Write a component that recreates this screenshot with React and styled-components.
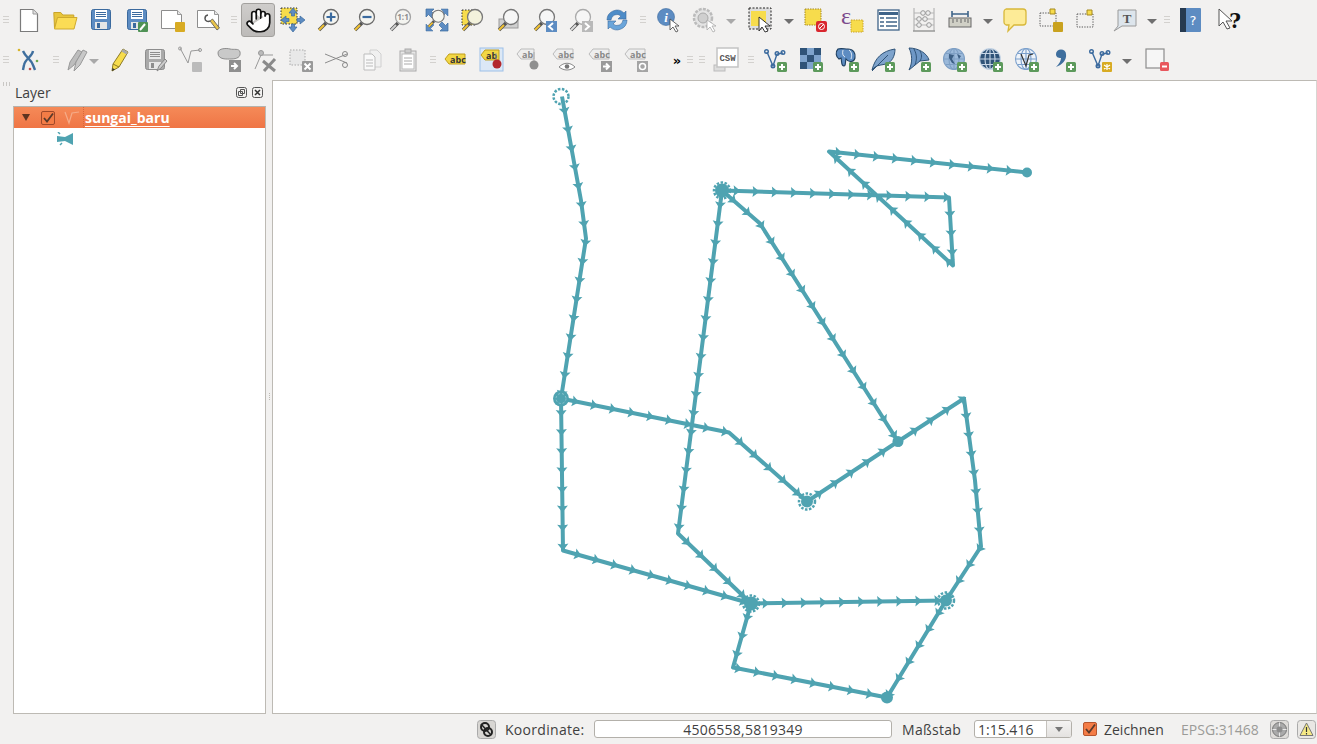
import React from "react";
import styled, { createGlobalStyle } from "styled-components";
import { Hand } from "lucide-react";

const Global = createGlobalStyle`
  html, body { margin: 0; padding: 0; background: #f2f1f0; overflow: hidden; }
  body { font-family: "Open Sans", "Noto Sans", sans-serif; color: #3c3c3c; }
`;

const Win = styled.div`
  width: 1317px;
  height: 744px;
  display: flex;
  flex-direction: column;
  background: #f2f1f0;
`;
const ToolRow = styled.div`
  height: 40px;
  display: flex;
  align-items: center;
  flex: none;
`;
const Tool = styled.div`
  flex: none;
  width: ${p => p.$w || 36}px;
  margin-left: ${p => p.$ml || 0}px;
  height: 34px;
  display: flex;
  align-items: center;
  justify-content: center;
  box-sizing: border-box;
  ${p => p.$on && `
    background: linear-gradient(#cfcdcb, #bdbbb9);
    border: 1px solid #a3a19e;
    border-radius: 3px;
  `}
  svg { display: block; overflow: visible; flex: none; }
`;
const Grip = styled.div`
  flex: none;
  width: ${p => p.$w}px;
  height: 9px;
  background: repeating-linear-gradient(#d3d1ce 0 1px, transparent 1px 3px) center / 6px 9px no-repeat;
`;
const Drop = styled.div`
  flex: none;
  width: ${p => p.$w}px;
  display: flex;
  justify-content: center;
  &::after {
    content: "";
    flex: none;
    border-left: 5px solid transparent;
    border-right: 5px solid transparent;
    border-top: 5px solid ${p => p.$light ? "#a9a9a9" : "#6f6f6f"};
    margin-top: 3px;
  }
`;
const More = styled.div`
  flex: none;
  width: 14px;
  margin-left: 16px;
  font: bold 13px "DejaVu Sans", sans-serif;
  color: #000;
  text-align: center;
`;
const Main = styled.div`
  flex: none;
  height: 634px;
  display: flex;
`;
const Panel = styled.div`
  flex: none;
  width: 266px;
  display: flex;
  flex-direction: column;
`;
const PanelHead = styled.div`
  height: 26px;
  display: flex;
  align-items: center;
  padding: 0 3px 2px 3px;
  box-sizing: border-box;
  font-size: 14px;
  color: #3f3f3f;
`;
const HeadGrip = styled.div`
  width: 8px;
  height: 4px;
  margin: -16px 4px 0 0;
  background: repeating-linear-gradient(90deg, #c9c7c4 0 1px, transparent 1px 3px);
`;
const HeadTitle = styled.span`
  flex: 1;
`;
const HeadBtn = styled.div`
  width: 11px;
  height: 11px;
  margin-left: 5px;
  svg { display: block; }
`;
const TreeBox = styled.div`
  flex: 1;
  margin-left: 13px;
  background: #fff;
  border: 1px solid #bdbab4;
  border-top-color: #b5b2ac;
`;
const Selected = styled.div`
  height: 21px;
  display: flex;
  align-items: center;
  background: linear-gradient(#f58a58, #ef7545);
  color: #fff;
  padding-left: 8px;
`;
const Expander = styled.div`
  width: 0;
  height: 0;
  border-left: 4px solid transparent;
  border-right: 4px solid transparent;
  border-top: 7px solid #5e3320;
  margin-right: 11px;
`;
const Check = styled.div`
  flex: none;
  width: 14px;
  height: 14px;
  box-sizing: border-box;
  border: 1px solid ${p => p.$dark ? "#a0492a" : "#b6562f"};
  border-radius: 2px;
  background: #f47c46;
  display: flex;
  align-items: center;
  justify-content: center;
  svg { display: block; }
`;
const LayerName = styled.span`
  margin-left: 2px;
  padding-left: 1px;
  font-size: 14px;
  font-weight: 700;
  text-decoration: underline;
  text-underline-offset: 3px;
  line-height: 21px;
  border-left: 1px dotted #d9663a;
`;
const Legend = styled.div`
  height: 21px;
  padding-left: 43px;
  display: flex;
  align-items: center;
  svg { display: block; }
`;
const Splitter = styled.div`
  flex: none;
  width: 6px;
  display: flex;
  align-items: center;
  justify-content: center;
  &::after {
    content: "";
    width: 1px;
    height: 8px;
    background: repeating-linear-gradient(#bdbab4 0 1px, transparent 1px 2px);
  }
`;
const MapBox = styled.div`
  flex: none;
  width: 1045px;
  box-sizing: border-box;
  background: #fff;
  border: 1px solid #bdbab4;
  border-right-color: #d8d6d2;
  svg { display: block; width: 100%; height: 100%; }
`;
const Status = styled.div`
  flex: 1;
  display: flex;
  align-items: center;
  justify-content: flex-end;
  font-size: 14px;
  color: #3f3f3f;
  padding-right: 1px;
`;
const StatusLabel = styled.span`
  flex: none;
  width: ${p => p.$w}px;
  letter-spacing: .3px;
  white-space: nowrap;
`;
const CoordInput = styled.div`
  width: 298px;
  height: 18px;
  box-sizing: border-box;
  margin: 0 10px 0 10px;
  background: #fff;
  border: 1px solid #b3b0aa;
  border-radius: 3px;
  text-align: center;
  font-size: 14px;
  letter-spacing: .25px;
  line-height: 17px;
`;
const ScaleCombo = styled.div`
  width: 98px;
  height: 18px;
  box-sizing: border-box;
  margin: 0 11px 0 8px;
  background: #fff;
  border: 1px solid #b3b0aa;
  border-radius: 3px;
  display: flex;
  font-size: 14px;
  line-height: 18px;
  overflow: hidden;
`;
const ScaleValue = styled.div`
  flex: 1;
  padding-left: 3px;
`;
const ScaleBtn = styled.div`
  width: 24px;
  background: linear-gradient(#f4f3f2, #e4e2e0);
  border-left: 1px solid #c5c2bd;
  display: flex;
  align-items: center;
  justify-content: center;
  &::after {
    content: "";
    border-left: 4px solid transparent;
    border-right: 4px solid transparent;
    border-top: 5px solid #777;
  }
`;
const RenderLabel = styled.span`
  flex: none;
  width: 60px;
  white-space: nowrap;
  margin: 0 17px 0 7px;
`;
const Epsg = styled.span`
  flex: none;
  width: 79px;
  color: #9b9b98;
  margin-right: 10px;
  white-space: nowrap;
`;
const StatusIcon = styled.div`
  flex: none;
  width: 19px;
  height: 19px;
  margin: ${p => p.$m || "0"};
  svg { display: block; }
`;

const BLUE = "#5d8cc2", DBLUE = "#3b6a9e", YEL = "#f7dc4c", TEAL = "#4fa3b1";

const S = ({ children }) => <svg width="24" height="24" viewBox="0 0 24 24">{children}</svg>;

const Plus = ({ x = 14, y = 14 }) => (
  <g>
    <rect x={x} y={y} width="10" height="10" rx="1.5" fill="#5d9a5c" />
    <path d={`M${x + 5} ${y + 2}v6M${x + 2} ${y + 5}h6`} stroke="#fff" strokeWidth="2" />
  </g>
);
const Star = ({ x = 14, y = 14, c = "#d8ab23" }) => (
  <g>
    <rect x={x} y={y} width="10" height="10" rx="1" fill={c} />
    <path d={`M${x + 5} ${y + 2}v6M${x + 2} ${y + 3}l6 4M${x + 8} ${y + 3}l-6 4`} stroke="#fff" strokeWidth="1.2" />
  </g>
);
const Lens = ({ c = "#8a8a8a", fill = "#f4f4f0", h = "#f1c232" }) => (
  <g>
    <path d="M2 22l7-7" stroke="#555" strokeWidth="3.4" />
    <path d="M2 22l5-5" stroke={h} strokeWidth="2" />
    <circle cx="14" cy="9" r="7.5" fill={fill} stroke={c} strokeWidth="1.3" />
  </g>
);
const Disk = ({ c = BLUE, d = DBLUE, l = "#fff" }) => (
  <g>
    <rect x="2.5" y="1.5" width="19" height="20" rx="2" fill={c} stroke={d} />
    <rect x="6" y="2" width="12" height="9" fill={l} />
    <path d="M7 4.5h10M7 6.5h10M7 8.5h10" stroke={d} />
    <rect x="6" y="14" width="12" height="7" fill="#e6e6e6" />
    <rect x="8" y="15" width="3" height="5" fill={d} />
  </g>
);
const VLine = ({ c = DBLUE }) => (
  <g fill="none" stroke={c} strokeWidth="1.4">
    <path d="M4 4l6 14 4-12 6-1" />
    <circle cx="3.5" cy="3.5" r="1.8" /><circle cx="10" cy="18" r="1.8" />
    <circle cx="14" cy="5.5" r="1.8" /><circle cx="20" cy="4.5" r="1.8" />
  </g>
);
const Tag = ({ fill = "#f2d744", stroke = "#c09e1c", text = "abc", c = "#333", x = 1, y = 2, w = 20 }) => (
  <g>
    <path d={`M${x} ${y + 5}l4-5h${w - 4}v10h-${w - 4}z`} fill={fill} stroke={stroke} />
    <text x={x + 5} y={y + 8.5} fontSize="9" fontWeight="700" fontFamily="Open Sans, sans-serif" fill={c}>{text}</text>
  </g>
);
const Globe = ({ fill, line }) => (
  <g fill="none" stroke={line} strokeWidth="1.1">
    <circle cx="11" cy="11" r="10.5" fill={fill} />
    <ellipse cx="11" cy="11" rx="5" ry="10.5" />
    <path d="M1 11h20M3 5.5h16M3 16.5h16M11 .5v21" />
  </g>
);
const checker = [0, 1, 2].flatMap(r => [0, 1, 2].map(c => ({ r, c })));

const icons = {
  newDoc: <S><path d="M3.5 1.5H16L20.5 6V23.5H3.5Z" fill="#fff" stroke="#7b7b7b" strokeWidth="1.2" /><path d="M16 1.5V6H20.5" fill="#e2e2e2" stroke="#9a9a9a" /></S>,
  open: <S><path d="M1.5 20L.8 4.5h7l2 2.5h11v2.5H5z" fill="#e8c63c" stroke="#c9a42a" /><path d="M1.5 21 4.5 9.5H24L21 21Z" fill="#fbdc55" stroke="#cfaa2e" /></S>,
  save: <S><Disk /></S>,
  saveAs: <S><Disk /><rect x="13" y="14" width="10" height="10" rx="1" fill="#4f9255" /><path d="M15 22l5-6" stroke="#fff" strokeWidth="2" /></S>,
  newPrint: <S><path d="M.5 2.500h16l4 4v14H.5z" fill="#fff" stroke="#8d8d8d" /><path d="M16.500 2.500v4h4" fill="#e6e6e6" stroke="#999" /><Star x="14" y="14" /></S>,
  composer: <S><path d="M.5 2.500h17l4 4v13H.5z" fill="#fff" stroke="#8d8d8d" /><path d="M17.500 2.500v4h4" fill="#e6e6e6" stroke="#999" /><path d="M11 7a3.500 3.500 0 0 0-3 3.500c0 2.500 3 3.500 5 2.500" fill="none" stroke="#555" strokeWidth="1.500" /><path d="M13 13l7 9 2.500-2-7-9z" fill="#e9c44a" stroke="#555" strokeWidth=".8" /></S>,
  panMap: <S><rect x="0" y="0" width="16" height="16" fill={YEL} stroke="#333" strokeDasharray="1.5 1.5" /><path d="M12 0l4 5h-2.5v3h-3v-3H8zM12 24l-4-5h2.5v-3h3v3H16zM0 12l5-4v2.5h3v3H5V16zM24 12l-5-4v2.5h-3v3h3V16z" fill={BLUE} stroke={DBLUE} strokeWidth=".7" /></S>,
  zoomIn: <S><Lens c="#6b6b6b" /><path d="M9.5 9h9M14 4.5v9" stroke={DBLUE} strokeWidth="2.2" /></S>,
  zoomOut: <S><Lens c="#6b6b6b" /><path d="M9.5 9h9" stroke={DBLUE} strokeWidth="2.2" /></S>,
  zoom11: <S><Lens c="#a3a3a3" h="#cfcfcf" /><text x="14" y="12" textAnchor="middle" fontSize="8" fontWeight="700" fontFamily="Open Sans, sans-serif" fill="#8d8d8d">1:1</text></S>,
  zoomFull: <S><path d="M1 1h8L6.500 3.500 10 7l-3 3-3.500-3.500L1 9zM23 1v0M23 23h-8l2.500-2.500L14 17l3-3 3.500 3.500L23 15z" fill={BLUE} stroke={DBLUE} strokeWidth=".7" /><path d="M16 1h7v7l-2.500-2.500L17 9l-2-2 3.500-3.500zM8 23H1v-7l2.500 2.500L7 15l2 2-3.500 3.500z" fill={BLUE} stroke={DBLUE} strokeWidth=".5" /><g transform="translate(2 1) scale(.8)"><Lens c="#777" fill="#f6f6f0" /></g></S>,
  zoomSel: <S><rect x="1" y="2" width="14" height="15" fill={YEL} stroke="#333" strokeDasharray="1.5 1.5" /><Lens c="#777" fill="#f3f2dc" /></S>,
  zoomLayer: <S><rect x="2" y="11" width="19" height="9" fill="#cfcfcf" stroke="#9a9a9a" /><Lens c="#777" fill="#f6f6f6" /></S>,
  zoomLast: <S><Lens c="#777" fill="#f6f6f6" /><rect x="13" y="13" width="11" height="11" fill={BLUE} /><path d="M20 15l-4 3.5 4 3.5" fill="none" stroke="#fff" strokeWidth="2" /></S>,
  zoomNext: <S><Lens c="#aaa" h="#ddd" fill="#f6f6f6" /><rect x="13" y="13" width="11" height="11" fill="#b9b9b9" /><path d="M16 15l4 3.5-4 3.5" fill="none" stroke="#fff" strokeWidth="2" /></S>,
  refresh: <S><path d="M2 12a10 10 0 0 1 17-7l2-2v8h-8l3-3a6 6 0 0 0-10 4z" fill="#4d8cc8" stroke={DBLUE} strokeWidth=".6" /><path d="M22 12a10 10 0 0 1-17 7l-2 2v-8h8l-3 3a6 6 0 0 0 10-4z" fill="#6aa5da" stroke={DBLUE} strokeWidth=".6" /></S>,
  identify: <S><circle cx="9" cy="9" r="8.5" fill={BLUE} stroke={DBLUE} strokeWidth=".6" /><text x="9" y="14" textAnchor="middle" fontSize="13" fontWeight="700" fontStyle="italic" fontFamily="Liberation Serif, serif" fill="#fff">i</text><path d="M13 11v11l3-3 3 5 2-1-3-5h4z" fill="#fff" stroke="#444" strokeWidth=".8" /></S>,
  action: <S><circle cx="10" cy="10" r="9" fill="#e4e4e4" stroke="#bbb" strokeWidth="2.5" strokeDasharray="3 1.2" /><circle cx="10" cy="10" r="5" fill="#cfcfcf" stroke="#aaa" /><path d="M14 12v10l3-3 3 5 2-1-3-5h4z" fill="#fff" stroke="#aaa" strokeWidth=".8" /></S>,
  select: <S><rect x="0" y="0" width="22" height="21" fill="#ddd" stroke="#222" strokeDasharray="2 1.5" /><rect x="2" y="3" width="15" height="15" fill={YEL} /><path d="M10 9v14l3-4 3 5 3-1-3-5h5z" fill="#fff" stroke="#222" strokeWidth=".9" /></S>,
  deselect: <S><rect x="1" y="1" width="16" height="16" fill={YEL} stroke="#a68a1e" strokeDasharray="1.5 1" /><rect x="12" y="13" width="11" height="11" rx="2" fill="#d9262e" /><circle cx="17.5" cy="18.5" r="3" fill="none" stroke="#fff" /><path d="M15 21l5-5" stroke="#fff" /></S>,
  expr: <S><rect x="11" y="12" width="12" height="12" fill={YEL} stroke="#c9a42a" strokeDasharray="1.5 1" /><text x="6" y="16" textAnchor="middle" fontSize="24" fontFamily="Liberation Serif, serif" fill="#7c4a8c">ε</text></S>,
  table: <S><rect x="2" y="2" width="21" height="20" fill="#fff" stroke="#3f6489" strokeWidth="1.3" /><path d="M3 5.5h19" stroke="#3f6489" strokeWidth="3" /><path d="M4 10h4M4 14h4M4 18h4M10 10h11M10 14h11M10 18h11" stroke="#3f6489" strokeWidth="1.5" /></S>,
  stats: <S><path d="M2 0v23M22 0v23" stroke="#aaa" /><path d="M1 23h22" stroke="#999" strokeWidth="1.500" /><path d="M2 5h20M2 11h20M2 17h20" stroke="#b5b5b5" /><circle cx="11" cy="5" r="2.300" fill="#eee" stroke="#999" /><circle cx="16" cy="5" r="2.300" fill="#eee" stroke="#999" /><circle cx="7" cy="11" r="2.300" fill="#eee" stroke="#999" /><circle cx="13" cy="11" r="2.300" fill="#eee" stroke="#999" /><circle cx="7" cy="17" r="2.300" fill="#eee" stroke="#999" /><circle cx="17" cy="17" r="2.300" fill="#eee" stroke="#999" /></S>,
  measure: <S><path d="M4 3v6M20 3v6M4 6h16" stroke="#3f6489" strokeWidth="1.6" /><rect x="1" y="10" width="22" height="9" fill="#d0d0c6" stroke="#666" /><path d="M5 11v4M9 11v3M13 11v4M17 11v3M20 11v4" stroke="#666" /></S>,
  tip: <S><path d="M3 1h17a3 3 0 0 1 3 3v10a3 3 0 0 1-3 3H11l-6 6 1-6H3a3 3 0 0 1-2-3V4a3 3 0 0 1 2-3z" fill="#fdeb97" stroke="#d8b83a" strokeWidth="1.3" /></S>,
  annotNew: <S><rect x="1" y="5" width="16" height="13" fill="none" stroke="#555" strokeDasharray="1.3 1.3" /><path d="M11 1h5v5h-5z" fill={YEL} stroke="#a68a1e" /><Star x="14" y="14" c="#c9a21f" /></S>,
  annot: <S><rect x="2" y="6" width="16" height="13" fill="none" stroke="#555" strokeDasharray="1.3 1.3" /><path d="M12 2h5v5h-5z" fill={YEL} stroke="#a68a1e" /></S>,
  textAnn: <S><path d="M5 2h18v16H9l-8 5 4-5z" fill="#dde5ec" stroke="#9a9a9a" /><text x="14" y="15" textAnchor="middle" fontSize="13" fontWeight="700" fontFamily="Liberation Serif, serif" fill="#555">T</text></S>,
  help: <S><rect x="1" y="0" width="20" height="24" rx="1" fill={BLUE} /><rect x="0" y="0" width="6" height="24" fill="#263a50" /><text x="13" y="17" textAnchor="middle" fontSize="13" fontFamily="DejaVu Sans, sans-serif" fill="#fff">?</text></S>,
  whatsThis: <S><path d="M1 1v17l4-4 4 7 3-1-4-7h6z" fill="#fff" stroke="#555" /><text x="17" y="20" textAnchor="middle" fontSize="20" fontWeight="700" fontFamily="DejaVu Serif, serif" fill="#111">?</text></S>,

  digit: <S><path d="M6 3c3 7 8 8 10 14l2 5M16 3c-1 6-8 8-9 14l-1 5" fill="none" stroke="#3f6f9e" strokeWidth="2.4" /><circle cx="2" cy="2" r="1.3" fill="#d7b52a" /><circle cx="20" cy="13" r="1.3" fill="#6ba84f" /><circle cx="13" cy="21" r="1.3" fill="#c0504d" /></S>,
  pencils: <S><path d="M2 22l2-8 8-12 4 2-8 13z" fill="#bdbdbd" stroke="#999" /><path d="M8 23l2-9 7-12 4 2-7 13z" fill="#c8c8c8" stroke="#999" /></S>,
  pencil: <S><path d="M5 23l1-7L16 1l5 3-9 15z" fill={YEL} stroke="#8c7a25" /><path d="M6 16l6 3" stroke="#8c7a25" /><path d="M16 1l5 3-1.500 2.500-5-3z" fill="#aaa" /><path d="M5 23l.5-3 2.500 1.500z" fill="#333" /></S>,
  saveEd: <S><Disk c="#a9a9a9" d="#8d8d8d" l="#e9e9e9" /><path d="M14 23l2-5 6-7 2 2-6 7z" fill="#ccc" stroke="#888" /></S>,
  addFeat: <S><g transform="translate(-1 -1)"><path d="M2 1l8 15 3-12 9-1" fill="none" stroke="#999" /><circle cx="2" cy="1.500" r="1.500" fill="none" stroke="#999" /><circle cx="22" cy="3" r="1.500" fill="none" stroke="#999" /></g><Star x="13" y="14" c="#bbb" /></S>,
  addRing: <S><path d="M1 5c0-5 9-5 12-4 4 1 9-1 10 3 1 5-3 7-9 7-4 0-13 1-13-6z" fill="#c9c9c9" stroke="#8e8e8e" /><rect x="12" y="12" width="12" height="12" fill="#8f8f8f" /><path d="M14 18h5M17 15l3 3-3 3" fill="none" stroke="#fff" strokeWidth="2" /></S>,
  nodeTool: <S><path d="M2 21l6-14h12" fill="none" stroke="#999" /><circle cx="8" cy="5" r="2.500" fill="#bbb" stroke="#999" /><path d="M10 13l12 10M22 11l-11 12" stroke="#8a8a8a" strokeWidth="3" /></S>,
  delete: <S><rect x="1" y="2" width="15" height="15" fill="#e8e8e8" stroke="#aaa" strokeDasharray="1.500 1.500" /><rect x="13" y="13" width="11" height="11" rx="1" fill="#999" /><path d="M15.500 15.500l6 6M21.500 15.500l-6 6" stroke="#fff" strokeWidth="2" /></S>,
  cut: <S><path d="M0 7l22 9M0 16 22 7" stroke="#8c8c8c" strokeWidth="1" transform="translate(0 -1)" /><circle cx="20" cy="6" r="2.500" fill="none" stroke="#888" /><circle cx="20" cy="17" r="2.500" fill="none" stroke="#888" /></S>,
  copy: <S><path d="M9 2h7l4 4v13H9z" fill="#f0f0f0" stroke="#d0d0d0" /><path d="M3 6h8l3 3v13H3z" fill="#f9f9f9" stroke="#bdbdbd" /><path d="M5 12h7M5 15h7M5 18h7" stroke="#bbb" /></S>,
  paste: <S><rect x="3" y="3" width="16" height="20" fill="#e7e7e7" stroke="#aaa" /><rect x="5" y="6" width="12" height="15" fill="#fff" stroke="#bbb" /><rect x="8" y="1" width="6" height="4" fill="#ccc" stroke="#aaa" /><path d="M7 10h8M7 13h8M7 16h8" stroke="#aaa" /></S>,
  lab1: <S><Tag x={1} y={6} /></S>,
  lab2: <S><rect x="0" y="0" width="23" height="23" fill="#dce8f6" stroke="#9cc0e8" /><Tag x={1} y={2} w={18} text="ab" /><path d="M16 5v8" stroke="#999" /><circle cx="17" cy="16" r="4.500" fill="#b3282d" /></S>,
  lab3: <S><Tag fill="#eee" stroke="#bbb" c="#888" text="ab" w={17} y={1} /><path d="M18 4v9" stroke="#aaa" /><circle cx="18" cy="17" r="4.500" fill="#8f8f8f" /></S>,
  lab4: <S><Tag fill="#eee" stroke="#bbb" c="#888" y={1} /><path d="M7 19c5-5 11-5 16 0-5 4-11 4-16 0z" fill="#fff" stroke="#888" /><circle cx="15" cy="18.500" r="2.300" fill="#777" /></S>,
  lab5: <S><Tag fill="#eee" stroke="#bbb" c="#888" y={1} /><rect x="13" y="13" width="11" height="11" fill="#9a9a9a" /><path d="M15 18.500h5M18 15.500l3 3-3 3" fill="none" stroke="#fff" strokeWidth="2" /></S>,
  lab6: <S><Tag fill="#eee" stroke="#bbb" c="#888" y={1} /><rect x="13" y="13" width="11" height="11" fill="#a4a4a4" /><circle cx="18.500" cy="18.500" r="3" fill="none" stroke="#fff" strokeWidth="1.500" /></S>,
  csw: <S><rect x="0" y="17" width="11" height="6" fill="#ddd" stroke="#bbb" /><rect x="3" y="0" width="21" height="19" fill="#fff" stroke="#c3c3c3" strokeWidth="1.500" /><text x="13.500" y="13" textAnchor="middle" fontSize="9" fontWeight="700" fontFamily="Liberation Mono, monospace" fill="#555">CSW</text></S>,
  addV: <S><VLine /><Plus /></S>,
  addRaster: <S>{checker.map(({ r, c }) => <rect key={`${r}${c}`} x={1 + c * 7} y={r * 7} width="7" height="7" fill={(r + c) % 2 ? "#7ea3cc" : "#2f5378"} />)}<Plus /></S>,
  addPg: <S><path d="M3 1c-3 3-2 8 1 10l2-1c1 4 0 8 3 8 2 0 1-4 2-7 3 4 8 3 9-1 1-5-2-9-7-9-4 0-7-1-10 0z" fill="#5d8cc2" stroke="#1f3f5f" strokeWidth="1.100" /><path d="M8 2c-1 4 0 6 2 7M14 2c3 2 3 6 2 9" fill="none" stroke="#fff" strokeWidth=".8" /><Plus /></S>,
  addFeather: <S><path d="M1 22C4 10 11 3 24 1c0 7-3 13-9 15-4 1-8 1-11 3z" fill="#7ea3cc" stroke="#2f5378" /><path d="M1 23 17 7" stroke="#2f5378" /><Plus /></S>,
  addWing: <S><path d="M2 0c9 0 18 5 20 12l-9 1-11 9c4-8 3-16 0-22z" fill="#6f98c6" stroke="#2f5378" /><path d="M7 1c3 6 3 10 1 16M13 3c2 3 2 7 0 10" stroke="#2f5378" fill="none" /><Plus /></S>,
  addWms: <S><Globe fill="#9bb9da" line="#7e9fc4" /><path d="M6 6l5 1-2 4 3 5-3-1-3-5zM14 6l4 2-2 3z" fill="#3c5f85" /><Plus /></S>,
  addWcs: <S><Globe fill="#2f5378" line="#c7d6e6" /><Plus /></S>,
  addWfs: <S><Globe fill="#eef3f9" line="#7ba0cc" /><path d="M6 6l5 12 3-11 4-1" fill="none" stroke="#333" strokeWidth="1.200" /><Plus /></S>,
  addDelim: <S><path d="M4 6a5 4.500 0 0 1 10 0c1 6-4 11-10 13 3-3 5-6 5-9-3 0-5-1-5-4z" fill="#3f6f9e" /><Plus x={14} y={14} /></S>,
  newV: <S><VLine /><Star /></S>,
  remove: <S><rect x="1" y="1" width="18" height="19" fill="#f6f6f6" stroke="#8d8d8d" strokeWidth="1.200" /><rect x="15" y="14" width="9" height="9" rx="1.500" fill="#e8575d" /><path d="M17 18.500h5" stroke="#fff" strokeWidth="2" /></S>,
};

const row1 = [
  ["g", 11], ["newDoc"], ["open"], ["save"], ["saveAs"], ["newPrint"], ["composer"], ["g", 14],
  ["pan"], ["panMap"], ["zoomIn"], ["zoomOut"], ["zoom11"], ["zoomFull"], ["zoomSel"], ["zoomLayer"], ["zoomLast"], ["zoomNext"], ["refresh"],
  ["g", 16], ["identify"], ["action"], ["d", 16, true], ["select", 36, 4], ["d", 19], ["deselect"], ["expr"], ["table"], ["stats"], ["measure"], ["d", 19],
  ["tip"], ["annotNew"], ["annot"], ["textAnn", 36, 2], ["d", 17], ["g", 14], ["help"], ["whatsThis", 36, 2],
];
const row2 = [
  ["g", 11], ["digit"], ["g", 17], ["pencils", 28], ["d", 4, true], ["pencil", 36, 5], ["saveEd"], ["addFeat"], ["addRing", 36, 2], ["nodeTool"], ["delete"], ["cut"], ["copy"], ["paste"],
  ["g", 11], ["lab1"], ["lab2"], ["lab3"], ["lab4"], ["lab5"], ["lab6"], ["more"], ["g", 12], ["g", 12], ["csw"], ["g", 13],
  ["addV"], ["addRaster"], ["addPg"], ["addFeather"], ["addWing"], ["addWms"], ["addWcs"], ["addWfs"], ["addDelim", 36, 1], ["newV"], ["d", 18], ["remove", 36, 3],
];

function renderTool([k, w, extra], i) {
  if (k === "g") return <Grip key={i} $w={w} />;
  if (k === "d") return <Drop key={i} $w={w} $light={extra} />;
  if (k === "more") return <More key={i}>»</More>;
  if (k === "pan") return <Tool key={i} $w={34} $on><Hand size={27} fill="#fff" color="#111" strokeWidth={1.5} /></Tool>;
  return <Tool key={i} $w={w} $ml={extra}>{icons[k]}</Tool>;
}

// river network in page coordinates
const lines = [
  [[562, 96], [581, 200], [586, 238], [561, 398]],
  [[561, 398], [563, 550], [751, 603]],
  [[561, 398], [729, 432], [807, 501]],
  [[807, 501], [898, 441], [964, 398], [975, 480], [981, 546], [946, 600], [887, 697]],
  [[722, 190], [760, 223], [898, 441]],
  [[722, 190], [949, 197], [953, 265], [829, 151], [1027, 172]],
  [[722, 190], [678, 533], [751, 603]],
  [[751, 603], [946, 600]],
  [[751, 603], [733, 667], [887, 697]],
];

function arrowsAlong(pts) {
  const out = [];
  let next = 15;
  let walked = 0;
  for (let i = 0; i < pts.length - 1; i++) {
    const [x1, y1] = pts[i];
    const [x2, y2] = pts[i + 1];
    const len = Math.hypot(x2 - x1, y2 - y1);
    while (next < walked + len) {
      const t = (next - walked) / len;
      out.push({
        x: x1 + (x2 - x1) * t,
        y: y1 + (y2 - y1) * t,
        a: (Math.atan2(y2 - y1, x2 - x1) * 180) / Math.PI,
      });
      next += 19.1;
    }
    walked += len;
  }
  return out;
}

const solid = [[1027, 172, 5], [898, 441, 5.5], [887, 697, 6], [722, 190, 7], [561, 398, 8], [807, 501, 6], [751, 603, 7], [946, 600, 6]];
const rings = [[561, 96, 7.5], [807, 501, 8], [751, 603, 8], [946, 600, 8], [722, 190, 8]];

function RiverMap() {
  return (
    <svg viewBox="273 80.5 1043 632">
      {lines.map((l, i) => (
        <g key={i}>
          <polyline points={l.map(p => p.join(",")).join(" ")} fill="none" stroke={TEAL} strokeWidth="4" strokeLinejoin="round" />
          {arrowsAlong(l).map((m, j) => (
            <path key={j} d="M3.5 0L-3.5 -5.5L-2.5 0L-3.5 5.5Z" fill={TEAL} transform={`translate(${m.x} ${m.y}) rotate(${m.a})`} />
          ))}
        </g>
      ))}
      {solid.map(([x, y, r], i) => <circle key={i} cx={x} cy={y} r={r} fill={TEAL} />)}
      {rings.map(([x, y, r], i) => (
        <circle key={i} cx={x} cy={y} r={r} fill="none" stroke={TEAL} strokeWidth="2.5" strokeDasharray="2.5 1.5" />
      ))}
      <circle cx="561" cy="398" r="5" fill="none" stroke="#8cc5ce" strokeWidth="1" strokeDasharray="2 2" />
    </svg>
  );
}

const Tick = ({ s = 12 }) => (
  <svg width={s} height={s} viewBox="0 0 12 12"><path d="M2 6l3 3.500L11 1.500" fill="none" stroke="#5a3a2b" strokeWidth="1.800" /></svg>
);

export default function App() {
  return (
    <Win>
      <Global />
      <ToolRow>{row1.map(renderTool)}</ToolRow>
      <ToolRow>{row2.map(renderTool)}</ToolRow>
      <Main>
        <Panel>
          <PanelHead>
            <HeadGrip />
            <HeadTitle>Layer</HeadTitle>
            <HeadBtn>
              <svg width="11" height="11" viewBox="0 0 11 11"><rect x=".5" y=".5" width="10" height="10" rx="2" fill="none" stroke="#555" /><path d="M4.500 2.500h4v4h-4zM2.500 4.500h4v4h-4z" fill="none" stroke="#555" /></svg>
            </HeadBtn>
            <HeadBtn>
              <svg width="11" height="11" viewBox="0 0 11 11"><rect x=".5" y=".5" width="10" height="10" rx="2" fill="none" stroke="#555" /><path d="M3 3l5 5M8 3l-5 5" stroke="#333" strokeWidth="1.500" /></svg>
            </HeadBtn>
          </PanelHead>
          <TreeBox>
            <Selected>
              <Expander />
              <Check $dark><Tick /></Check>
              <svg width="18" height="16" viewBox="0 0 18 16" style={{ marginLeft: 8, flex: "none" }}>
                <path d="M2 2l4 11 3-10 7-1" fill="none" stroke="#f5ab88" strokeWidth="1.200" />
              </svg>
              <LayerName>sungai_baru</LayerName>
            </Selected>
            <Legend>
              <svg width="16" height="14" viewBox="0 0 16 14">
                <path d="M0 4l8 1 8-4v12L8 9 0 10z" fill={TEAL} />
                <path d="M1 0l2 2M3 13l2-2" stroke={TEAL} strokeWidth="1.500" />
              </svg>
            </Legend>
          </TreeBox>
        </Panel>
        <Splitter />
        <MapBox><RiverMap /></MapBox>
      </Main>
      <Status>
        <StatusIcon $m="0 9px 0 0">
          <svg width="19" height="19" viewBox="0 0 19 19">
            <rect x=".5" y=".5" width="18" height="18" rx="3" fill="#d8d6d3" stroke="#aaa" />
            <circle cx="8" cy="7" r="4" fill="none" stroke="#222" strokeWidth="2" />
            <circle cx="11" cy="12" r="4" fill="none" stroke="#222" strokeWidth="2" />
            <path d="M4 4l10 11" stroke="#222" strokeWidth="1.500" />
          </svg>
        </StatusIcon>
        <StatusLabel $w={79}>Koordinate:</StatusLabel>
        <CoordInput>4506558,5819349</CoordInput>
        <StatusLabel $w={64}>Maßstab</StatusLabel>
        <ScaleCombo>
          <ScaleValue>1:15.416</ScaleValue>
          <ScaleBtn />
        </ScaleCombo>
        <Check><Tick /></Check>
        <RenderLabel>Zeichnen</RenderLabel>
        <Epsg>EPSG:31468</Epsg>
        <StatusIcon $m="0 8px 0 0">
          <svg width="19" height="19" viewBox="0 0 19 19">
            <rect x=".5" y=".5" width="18" height="18" rx="3" fill="#dedcd9" stroke="#aaa" />
            <circle cx="9.500" cy="9.500" r="7" fill="#aaa" stroke="#777" />
            <path d="M9.500 2.500v14M2.500 9.500h14" stroke="#e9e9e9" />
            <circle cx="9.500" cy="9.500" r="3" fill="#8d8d8d" />
          </svg>
        </StatusIcon>
        <StatusIcon>
          <svg width="19" height="19" viewBox="0 0 19 19">
            <rect x=".5" y=".5" width="18" height="18" rx="3" fill="#e9e7e4" stroke="#aaa" />
            <path d="M9.500 3L16 15.500H3z" fill="#f5e985" stroke="#777" />
            <path d="M9.500 7v5M9.500 13v1.500" stroke="#333" strokeWidth="1.200" />
          </svg>
        </StatusIcon>
      </Status>
    </Win>
  );
}
